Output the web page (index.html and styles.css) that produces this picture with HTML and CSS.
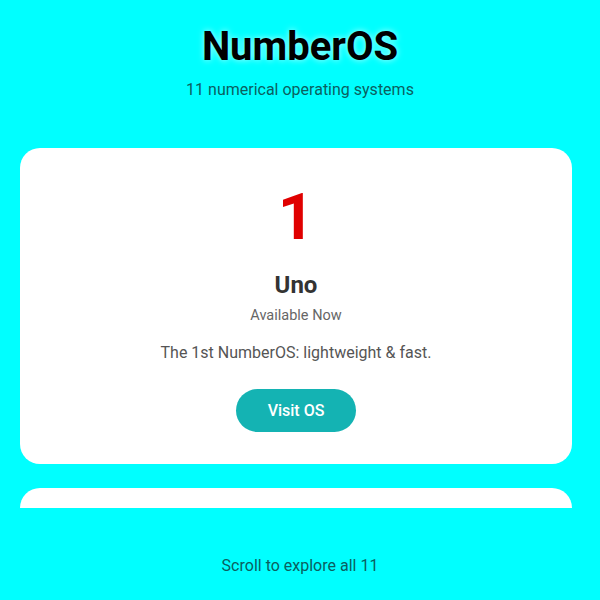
FILE: index.html
```html
<!DOCTYPE html>
<html lang="en">
<head>
<meta charset="utf-8">
<title>NumberOS</title>
<link rel="stylesheet" href="styles.css">
</head>
<body>
<header class="header">
  <h1 class="title">NumberOS</h1>
  <p class="subtitle">11 numerical operating systems</p>
</header>
<main class="list">
  <section class="card">
    <div class="num">1</div>
    <h2 class="name">Uno</h2>
    <p class="status">Available Now</p>
    <p class="desc">The 1st NumberOS: lightweight &amp; fast.</p>
    <a class="btn" href="#">Visit OS</a>
  </section>
  <section class="card card-next"></section>
</main>
<footer class="footer">Scroll to explore all 11</footer>
</body>
</html>
```
FILE: styles.css
```css
html, body {
  margin: 0;
  padding: 0;
}
body {
  background: #00ffff;
  font-family: Roboto, "Liberation Sans", Arial, sans-serif;
  height: 600px;
  overflow: hidden;
}
.header {
  padding-top: 23px;
  text-align: center;
}
.title {
  margin: 0;
  font-size: 40px;
  line-height: 48px;
  font-weight: 700;
  color: #000;
  text-shadow: 0 0 6px rgba(255,255,255,0.7);
}
.subtitle {
  margin: 9px 0 0;
  font-size: 16px;
  line-height: 20px;
  color: #0b5f5f;
}
.list {
  margin-top: 48px;
  height: 360px;
  overflow: hidden;
  padding: 0 28px 0 20px;
  display: flex;
  flex-direction: column;
  gap: 24px;
}
.card {
  flex: none;
  background: #fff;
  border-radius: 20px;
  padding: 31px 20px 32px;
  text-align: center;
  display: flex;
  flex-direction: column;
  align-items: center;
}
.card-next {
  height: 300px;
}
.num {
  font-size: 64px;
  line-height: 77px;
  font-weight: 700;
  color: #e00000;
}
.name {
  margin: 15px 0 0;
  font-size: 24px;
  line-height: 29px;
  font-weight: 700;
  color: #333;
}
.status {
  margin: 7px 0 0;
  font-size: 14.5px;
  line-height: 17px;
  color: #666;
}
.desc {
  margin: 19px 0 0;
  font-size: 16px;
  line-height: 20px;
  color: #555;
}
.btn {
  margin-top: 26px;
  width: 120px;
  height: 43px;
  border-radius: 22px;
  background: #14b3b3;
  color: #fff;
  text-decoration: none;
  font-size: 16px;
  font-weight: 500;
  display: flex;
  align-items: center;
  justify-content: center;
}
.footer {
  margin-top: 48px;
  text-align: center;
  font-size: 16px;
  line-height: 20px;
  color: #0b5f5f;
}
```
